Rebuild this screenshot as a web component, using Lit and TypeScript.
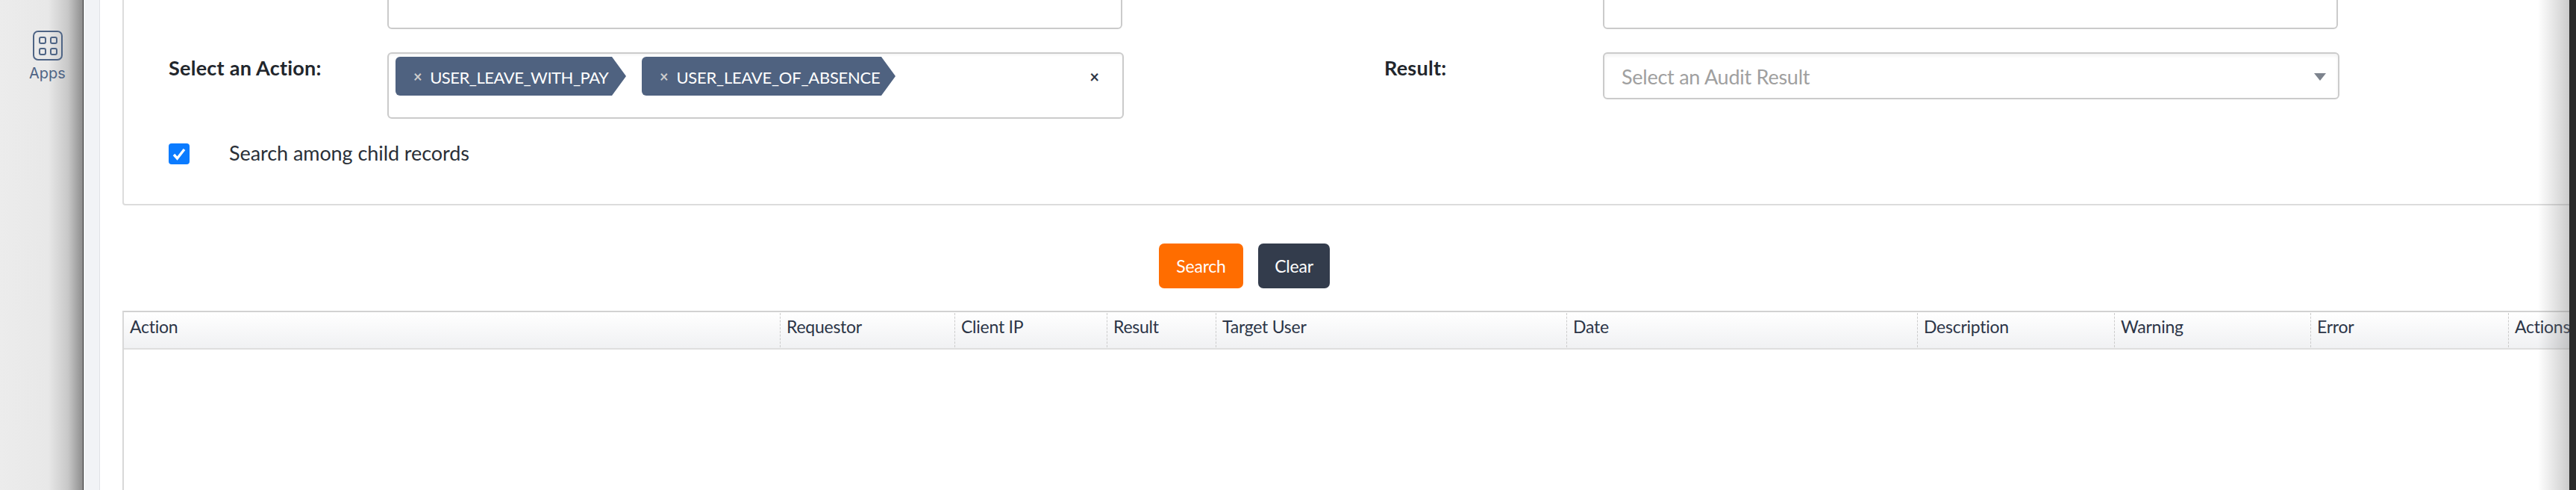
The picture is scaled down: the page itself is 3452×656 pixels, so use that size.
import { LitElement, html, css } from "lit";
import { customElement } from "lit/decorators.js";

const COLS = [
  { label: "Action", w: 879 },
  { label: "Requestor", w: 234 },
  { label: "Client IP", w: 204 },
  { label: "Result", w: 146 },
  { label: "Target User", w: 470 },
  { label: "Date", w: 470 },
  { label: "Description", w: 264 },
  { label: "Warning", w: 263 },
  { label: "Error", w: 265 },
  { label: "Actions", w: 120 },
];

@customElement("app-root")
export class AppRoot extends LitElement {
  static styles = css`
    :host { display: block; width: 100%; height: 656px; overflow: hidden; font-family: Lato, "Noto Sans", sans-serif; color: #262b33; }
    * { box-sizing: border-box; }
    .page { display: flex; height: 656px; overflow: hidden; background: #fff; }
    .sidebar { flex: 0 0 112px; border-right: 1px solid #333; background: linear-gradient(90deg, #ececec 0, #e8e8e8 58%, #c8c8c8 82%, #8d8d8d 100%); display: flex; flex-direction: column; align-items: center; padding: 41px 0 0 16px; gap: 5px; }
    .sidebar svg { display: block; }
    .apps { font: 400 20px Inter, sans-serif; color: #4e6485; }
    .gutter { flex: 0 0 22px; background: #f1f3f6; border-right: 1px solid #dfe2e6; }
    .main { flex: 1; min-width: 0; position: relative; overflow: hidden; padding-left: 30px; }
    .edge { flex: 0 0 9px; background: #2b2b2b; }
    .shade { position: absolute; top: 0; right: 0; bottom: 0; width: 42px; background: linear-gradient(90deg, rgba(120,120,120,0), rgba(120,120,120,.38)); }
    .card { width: 3400px; margin-top: -50px; border: 2px solid #dcdcdc; border-radius: 4px; padding: 24px 0 53px 60px; }
    .form { display: grid; grid-template-columns: 293px 985px 351px 293px 985px; row-gap: 31px; align-items: start; }
    .label { font-weight: 700; font-size: 27px; letter-spacing: 0.25px; line-height: 34px; color: #22262c; }
    .l1 { margin-top: -13px; }
    .l2 { margin-top: 4px; }
    .input { height: 63px; border: 2px solid #cbcbcb; border-radius: 6px; }
    .select { height: 63px; margin-right: -2px; border: 2px solid #cbcbcb; border-radius: 6px; box-shadow: inset 0 3px 4px rgba(0,0,0,.05); display: flex; align-items: center; justify-content: space-between; padding: 2px 16px 0 23px; color: #a0a0a0; font-size: 27px; letter-spacing: -0.25px; }
    .arrow { width: 0; height: 0; border-left: 8px solid transparent; border-right: 8px solid transparent; border-top: 10px solid #7d838d; }
    .tags { height: 89px; margin-right: -2px; border: 2px solid #cbcbcb; border-radius: 6px; box-shadow: inset 0 2px 3px rgba(0,0,0,.04); padding: 4px 0 0 9px; display: flex; align-items: flex-start; gap: 40px; }
    .tag { position: relative; height: 52px; background: #4f6280; color: #fff; border-radius: 6px 0 0 6px; display: flex; align-items: center; padding-left: 24px; gap: 11px; font-size: 22px; white-space: nowrap; }
    .tag::after { content: ""; position: absolute; left: 100%; top: 0; border-left: 19px solid #4f6280; border-top: 26px solid transparent; border-bottom: 26px solid transparent; }
    .tag i { font-style: normal; color: #ccc; font-weight: 700; font-size: 20px; }
    .tag span { padding-top: 2px; }
    .t1 { width: 290px; letter-spacing: -0.47px; }
    .t2 { width: 321px; letter-spacing: -0.24px; }
    .clear { margin-left: auto; height: 52px; padding-right: 31px; display: flex; align-items: center; font-weight: 700; font-size: 22px; color: #2d3544; }
    .check { display: flex; align-items: center; margin-top: 33px; height: 28px; gap: 53px; font-size: 27px; letter-spacing: -0.07px; color: #2a2f37; }
    .check span:last-child { margin-top: -3px; }
    .box { width: 28px; height: 28px; border-radius: 4px; background: #0b7bff; display: flex; align-items: center; justify-content: center; }
    .actions { width: 3007px; margin-top: 51px; display: flex; justify-content: center; gap: 20px; }
    .btn { height: 60px; border: 0; border-radius: 7px; color: #fff; font: 400 23px Lato, sans-serif; letter-spacing: -0.2px; padding: 0; }
    .search { width: 113px; background: #ff6d00; }
    .reset { width: 96px; background: #333c4c; }
    .table { width: 3400px; margin-top: 30px; height: 240px; border-left: 2px solid #d8d8d8; border-top: 2px solid #d2d2d2; }
    .head { display: flex; height: 50px; background: linear-gradient(180deg, #fff, #f0f1f3); border-bottom: 2px solid #dedede; align-items: center; }
    .cell { height: 46px; flex: none; padding: 0 0 10px 8px; border-left: 1px dashed #ccc; font-size: 23px; letter-spacing: -0.25px; color: #2c3547; white-space: nowrap; display: flex; align-items: center; }
    .cell:first-child { border-left: 0; padding-left: 8px; }
  `;

  render() {
    return html`<div class="page">
      <aside class="sidebar">
        <svg width="40" height="40" viewBox="0 0 40 40" fill="none" stroke="#4e6485" stroke-width="2">
          <rect x="1" y="1" width="38" height="38" rx="6"/>
          <rect x="9" y="9" width="8" height="8" rx="2"/><rect x="24" y="9" width="8" height="8" rx="2"/>
          <rect x="9" y="24" width="8" height="8" rx="2"/><rect x="24" y="24" width="8" height="8" rx="2"/>
        </svg>
        <span class="apps">Apps</span>
      </aside>
      <div class="gutter"></div>
      <main class="main">
        <section class="card">
          <div class="form">
            <div class="label l1">From Date:</div><div class="input"></div><div></div>
            <div class="label l1">To Date:</div><div class="input"></div>
            <div class="label l2">Select an Action:</div>
            <div class="tags">
              <div class="tag t1"><i>×</i><span>USER_LEAVE_WITH_PAY</span></div>
              <div class="tag t2"><i>×</i><span>USER_LEAVE_OF_ABSENCE</span></div>
              <span class="clear">×</span>
            </div>
            <div></div>
            <div class="label l2">Result:</div>
            <div class="select"><span>Select an Audit Result</span><span class="arrow"></span></div>
          </div>
          <label class="check">
            <span class="box"><svg width="20" height="20" viewBox="0 0 20 20" fill="none" stroke="#fff" stroke-width="3.4"><path d="M3 11l4.5 5L17 4"/></svg></span>
            <span>Search among child records</span>
          </label>
        </section>
        <div class="actions">
          <button class="btn search">Search</button>
          <button class="btn reset">Clear</button>
        </div>
        <div class="table">
          <div class="head">${COLS.map((c) => html`<div class="cell" style="width:${c.w}px"><span>${c.label}</span></div>`)}</div>
        </div>
        <div class="shade"></div>
      </main>
      <div class="edge"></div>
    </div>`;
  }
}
